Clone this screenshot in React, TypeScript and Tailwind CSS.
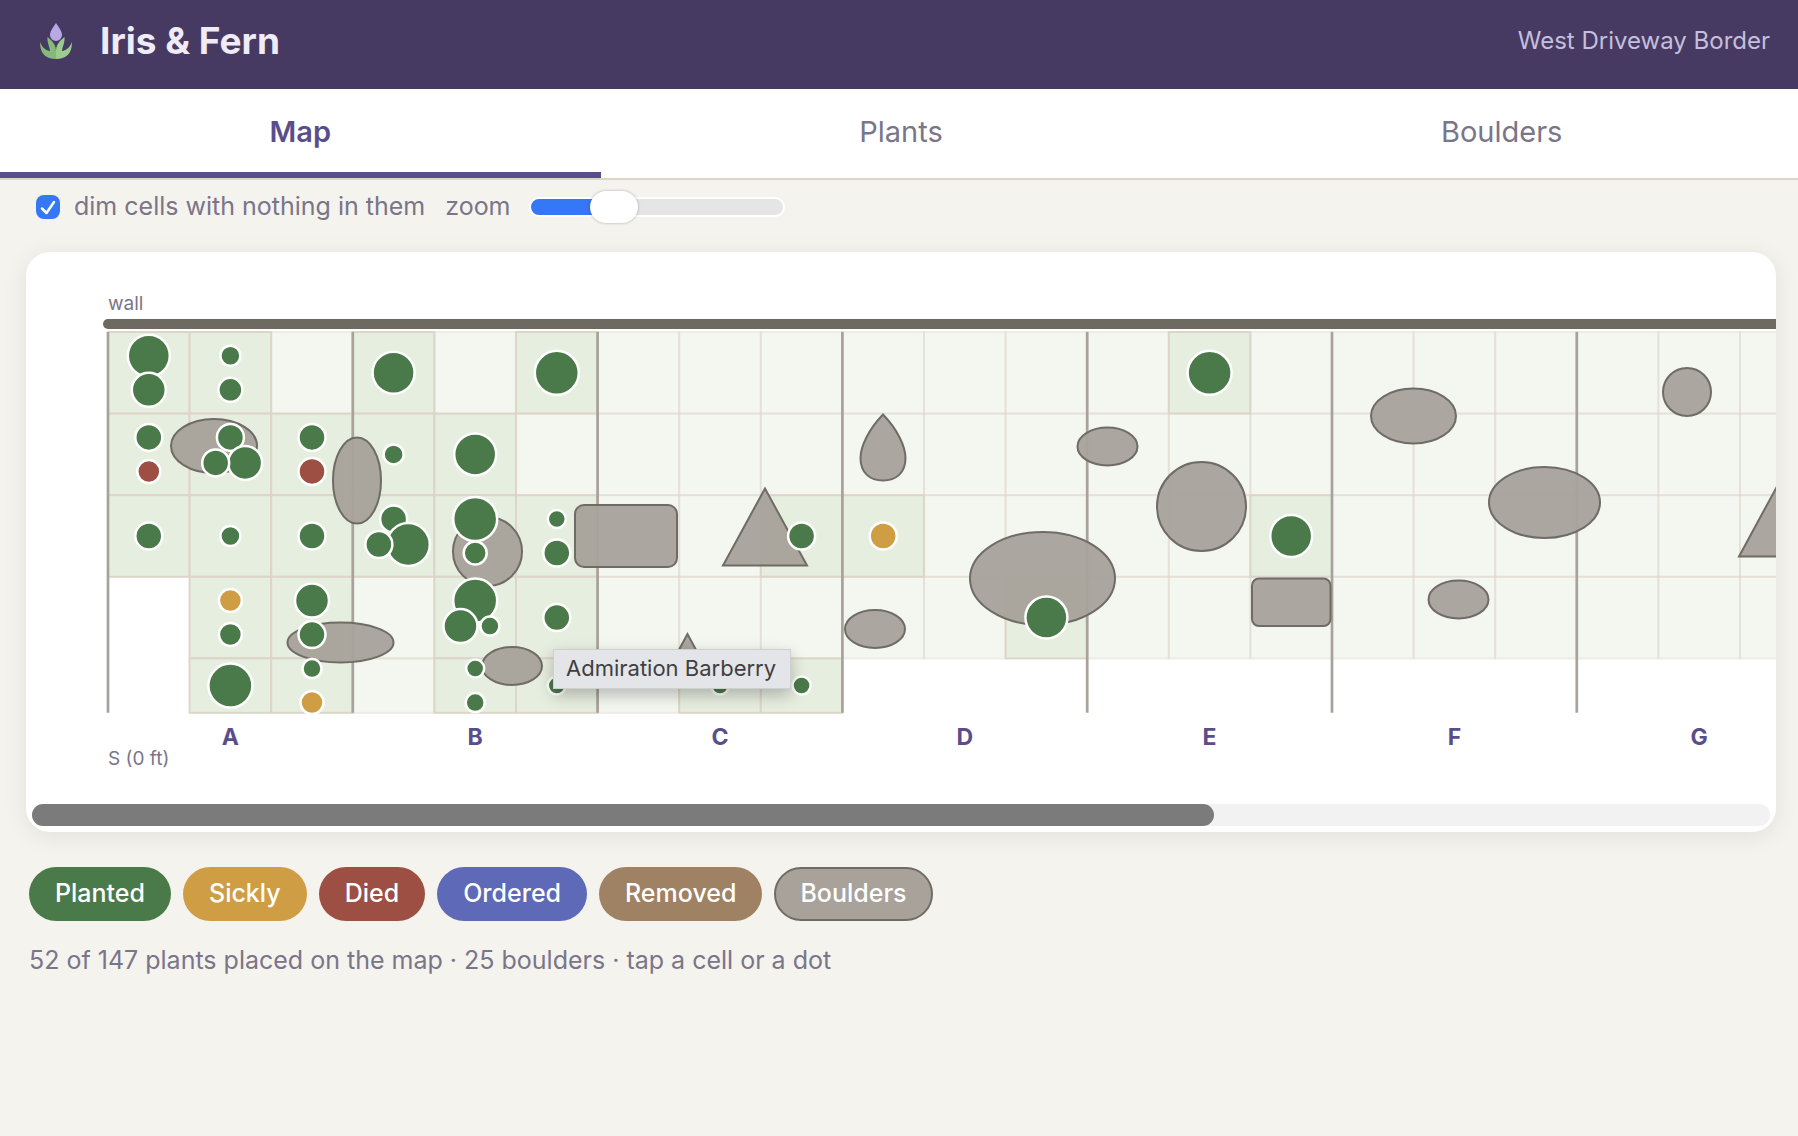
import React, { useState } from 'react'

type Status = 'planted' | 'sickly' | 'died'

interface Dot {
  r: number
  status?: Status
}

const CELL = 81.6
const SECTIONS = ['A', 'B', 'C', 'D', 'E', 'F', 'G']
const COLUMNS = 27
const DEPTH = CELL * 4 + (CELL * 2) / 3

const STATUS_FILL: Record<Status, string> = {
  planted: '#4b7a4a',
  sickly: '#cf9d43',
  died: '#9c4f42',
}

// keyed by "column-row"
const PLANTS: Record<string, Dot[]> = {
  '0-0': [{ r: 21 }, { r: 17 }],
  '1-0': [{ r: 10 }, { r: 12 }],
  '3-0': [{ r: 21 }],
  '5-0': [{ r: 22 }],
  '13-0': [{ r: 22 }],
  '0-1': [{ r: 13.5 }, { r: 11.5, status: 'died' }],
  '1-1': [{ r: 13.5 }, { r: 17 }, { r: 13.5 }],
  '2-1': [{ r: 13.5 }, { r: 13.5, status: 'died' }],
  '3-1': [{ r: 10 }],
  '4-1': [{ r: 21 }],
  '0-2': [{ r: 13.5 }],
  '1-2': [{ r: 10 }],
  '2-2': [{ r: 13.5 }],
  '3-2': [{ r: 13.5 }, { r: 21.5 }, { r: 13.5 }],
  '4-2': [{ r: 22 }, { r: 11.5 }],
  '5-2': [{ r: 9 }, { r: 13.5 }],
  '8-2': [{ r: 13.5 }],
  '9-2': [{ r: 13.5, status: 'sickly' }],
  '14-2': [{ r: 21 }],
  '1-3': [{ r: 11.5, status: 'sickly' }, { r: 11.5 }],
  '2-3': [{ r: 17 }, { r: 13.5 }],
  '4-3': [{ r: 22 }, { r: 9.5 }, { r: 17 }],
  '5-3': [{ r: 13.5 }],
  '11-3': [{ r: 21 }],
  '1-4': [{ r: 22 }],
  '2-4': [{ r: 9.5 }, { r: 11.5, status: 'sickly' }],
  '4-4': [{ r: 9 }, { r: 9.5 }],
  '5-4': [{ r: 9 }],
  '7-4': [{ r: 9 }],
  '8-4': [{ r: 9 }],
}

const cellExists = (col: number, row: number) => {
  if (row === 3) return col > 0
  if (row === 4) return col > 0 && col < 9
  return true
}

// one dot sits in the middle, two are stacked, three form a triangle
const dotOffset = (index: number, count: number) => {
  if (count === 1) return { x: 0, y: 0 }
  if (count === 2) return { x: 0, y: index === 0 ? -17 : 17 }
  const angle = ((-90 + index * 120) * Math.PI) / 180
  return { x: 17 * Math.cos(angle), y: 17 * Math.sin(angle) }
}

const Logo = () => (
  <svg className="w-8 h-9" viewBox="0 0 32 36" aria-hidden="true">
    <path d="M16 0C18.6 4 22 7.800 22 12A6 6 0 0 1 10 12C10 7.800 13.400 4 16 0Z" fill="#b9a8e3" />
    <path d="M0 19C2 24 5.500 27.500 10 28C9.500 23 7 20 7.500 14C12.500 18 16 22 16 28V36C6 36 0 31 0 19Z" fill="#86b879" />
    <path d="M32 19C30 24 26.500 27.500 22 28C22.500 23 25 20 24.500 14C19.500 18 16 22 16 28V36C26 36 32 31 32 19Z" fill="#9ccb8e" />
  </svg>
)

const Cells = ({ dim }: { dim: boolean }) => {
  const cells: React.ReactNode[] = []
  for (let col = 0; col < COLUMNS; col++) {
    for (let row = 0; row < 5; row++) {
      if (!cellExists(col, row)) continue
      const empty = !PLANTS[`${col}-${row}`]
      cells.push(
        <rect
          key={`${col}-${row}`}
          x={col * CELL}
          y={row * CELL}
          width={CELL}
          height={row === 4 ? (CELL * 2) / 3 : CELL}
          fill="#e6eedf"
          stroke="#ddd5c8"
          strokeWidth="2"
          opacity={dim && empty ? 0.45 : 1}
        />
      )
    }
  }
  return <g>{cells}</g>
}

const Boulders = () => (
  <g fill="#a8a29b" fillOpacity="0.96" stroke="#6f6b65" strokeWidth="2">
    <ellipse cx="106" cy="114" rx="43" ry="27" />
    <ellipse cx="249" cy="148.500" rx="24" ry="43" />
    <ellipse cx="232.500" cy="310.500" rx="53" ry="20" />
    <circle cx="379.500" cy="219.500" r="34.500" />
    <ellipse cx="404" cy="334" rx="30" ry="19" />
    <rect x="467" y="173" width="102" height="62" rx="9" />
    <path d="M657 156.500L615 233.500H699Z" />
    <path d="M579.500 302L559 340H600Z" />
    <path d="M775 82.500C760 98 752.500 115 752.500 126C752.500 141 762 148.500 775 148.500C788 148.500 797.500 141 797.500 126C797.500 115 790 98 775 82.500Z" />
    <ellipse cx="767" cy="297" rx="30" ry="19" />
    <ellipse cx="934.500" cy="246.500" rx="72.500" ry="46.500" />
    <ellipse cx="999.500" cy="114.500" rx="30" ry="19" />
    <circle cx="1093.500" cy="174.500" r="44.500" />
    <rect x="1144" y="246.500" width="78.500" height="47.500" rx="7" />
    <ellipse cx="1305.500" cy="84" rx="42.500" ry="27.500" />
    <ellipse cx="1436.500" cy="170.500" rx="55.500" ry="35.500" />
    <ellipse cx="1350.500" cy="267.500" rx="30" ry="19" />
    <circle cx="1579" cy="60" r="24" />
    <path d="M1673 147L1631 224.500H1715Z" />
  </g>
)

const Plants = () => (
  <g stroke="#fff" strokeWidth="2.500">
    {Object.entries(PLANTS).map(([key, dots]) => {
      const [col, row] = key.split('-').map(Number)
      const cx = (col + 0.5) * CELL
      const cy = row * CELL + (row === 4 ? CELL / 3 : CELL / 2)
      return dots.map((dot, i) => {
        const offset = dotOffset(i, dots.length)
        return (
          <circle
            key={`${key}-${i}`}
            cx={cx + offset.x}
            cy={cy + offset.y}
            r={dot.r}
            fill={STATUS_FILL[dot.status ?? 'planted']}
          />
        )
      })
    })}
  </g>
)

const BorderMap = ({ dim }: { dim: boolean }) => (
  <svg className="block shrink-0" width="2574" height="552" viewBox="-82 -80 2574 552" role="img" aria-label="Border map">
    <text x="0" y="-22" fontSize="19" fill="#7a7589">wall</text>
    <rect x="-5" y="-13" width={COLUMNS * CELL + 10} height="10" rx="5" fill="#6e6a62" />
    <Cells dim={dim} />
    <g stroke="#a8a29b" strokeWidth="2.700">
      {Array.from({ length: COLUMNS / 3 + 1 }, (_, i) => (
        <line key={i} x1={i * 3 * CELL} x2={i * 3 * CELL} y1="0" y2={DEPTH} />
      ))}
    </g>
    <Boulders />
    <Plants />
    <g fontSize="23" fontWeight="700" fill="#5a4e8a" textAnchor="middle">
      {SECTIONS.map((name, i) => (
        <text key={name} x={(i * 3 + 1.5) * CELL} y="413">{name}</text>
      ))}
    </g>
    <text x="0" y="433" fontSize="19" fill="#7a7589">S (0 ft)</text>
  </svg>
)

const TABS = ['Map', 'Plants', 'Boulders']

const FILTERS = [
  { label: 'Planted', style: 'px-[26px] bg-[#4b7a4a]' },
  { label: 'Sickly', style: 'px-[26px] bg-[#cf9d43]' },
  { label: 'Died', style: 'px-[26px] bg-[#9c4f42]' },
  { label: 'Ordered', style: 'px-[26px] bg-[#5e69b8]' },
  { label: 'Removed', style: 'px-[26px] bg-[#9f8263]' },
  { label: 'Boulders', style: 'px-6 bg-[#a8a29b] border-2 border-[#6f6b65]' },
]

const App = () => {
  const [tab, setTab] = useState('Map')
  const [dim, setDim] = useState(true)
  const [zoom, setZoom] = useState(29)

  return (
    <div className="min-h-screen overflow-x-hidden bg-[#f5f3ee] font-['Inter',sans-serif] text-[#7a7589]">
      <header className="flex items-center justify-between h-[89px] pl-10 pr-7 pb-2 bg-[#463a63]">
        <div className="flex items-center gap-7">
          <Logo />
          <h1 className="text-[37px] leading-10 font-bold text-[#efecf8]">Iris &amp; Fern</h1>
        </div>
        <span className="text-2xl text-[#c5bfdb]">West Driveway Border</span>
      </header>

      <nav className="grid grid-cols-3 mr-[-4px] bg-white border-b-2 border-[#ddd5c8]">
        {TABS.map((name) => (
          <button
            key={name}
            type="button"
            onClick={() => setTab(name)}
            className={
              name === tab
                ? 'h-[89px] pt-0.5 border-b-6 border-[#5a4e8a] text-[29px] font-semibold text-[#5a4e8a]'
                : 'h-[89px] pt-0.5 border-b-6 border-transparent text-[29px]'
            }
          >
            {name}
          </button>
        ))}
      </nav>

      <main className="pl-[26px] pr-[22px]">
        <div className="flex items-center gap-5 h-[72px] px-[10px] pb-[18px] text-[25px]">
          <label className="flex items-center gap-[14px]">
            <span className="grid">
              <input
                type="checkbox"
                checked={dim}
                onChange={(e) => setDim(e.target.checked)}
                className="peer appearance-none col-start-1 row-start-1 size-6 rounded-lg bg-white checked:bg-[#3478f6]"
              />
              <svg className="hidden peer-checked:block col-start-1 row-start-1 size-6 pointer-events-none" viewBox="0 0 24 24" fill="none" stroke="#fff" strokeWidth="2.500" strokeLinecap="round" strokeLinejoin="round">
                <path d="M6 13.500L10.500 18L18 7" />
              </svg>
            </span>
            dim cells with nothing in them
          </label>
          <label className="flex items-center gap-[18px]">
            zoom
            <input
              type="range"
              value={zoom}
              onChange={(e) => setZoom(Number(e.target.value))}
              className="appearance-none w-64 h-5 rounded-full border-2 border-white [&::-webkit-slider-thumb]:appearance-none [&::-webkit-slider-thumb]:w-12 [&::-webkit-slider-thumb]:h-8 [&::-webkit-slider-thumb]:rounded-full [&::-webkit-slider-thumb]:bg-white [&::-webkit-slider-thumb]:shadow-[0_0_3px_rgba(0,0,0,0.3)]"
              style={{ background: `linear-gradient(to right, #3478f6 ${zoom}%, #e5e5e5 ${zoom}%)` }}
            />
          </label>
        </div>

        <section className="relative rounded-3xl bg-white shadow-[0_4px_24px_rgba(0,0,0,0.08)]">
          <div className="overflow-hidden rounded-3xl">
            <BorderMap dim={dim} />
            <div className="mx-[6px] mb-[6px] h-[22px] rounded-full bg-[#f2f2f2]">
              <div className="w-[68%] h-full rounded-full bg-[#7b7b7b]" />
            </div>
          </div>
          <div role="tooltip" className="absolute left-[527px] top-[397px] pl-3 pr-[14px] pt-1 pb-[6px] border border-[#cfcfd1] bg-[#e4e5e8] text-[22px] leading-7 text-[#3f3f42] whitespace-nowrap shadow-[0_6px_16px_rgba(0,0,0,0.25)]">
            Admiration Barberry
          </div>
        </section>

        <div className="flex flex-wrap gap-3 mt-[35px] px-[3px]">
          {FILTERS.map(({ label, style }) => (
            <button key={label} type="button" className={`flex items-center justify-center h-[54px] rounded-full text-[25px] font-medium text-white ${style}`}>
              {label}
            </button>
          ))}
        </div>
        <p className="mt-[23px] px-[3px] text-[25px] leading-8">52 of 147 plants placed on the map · 25 boulders · tap a cell or a dot</p>
      </main>
    </div>
  )
}

export default App
